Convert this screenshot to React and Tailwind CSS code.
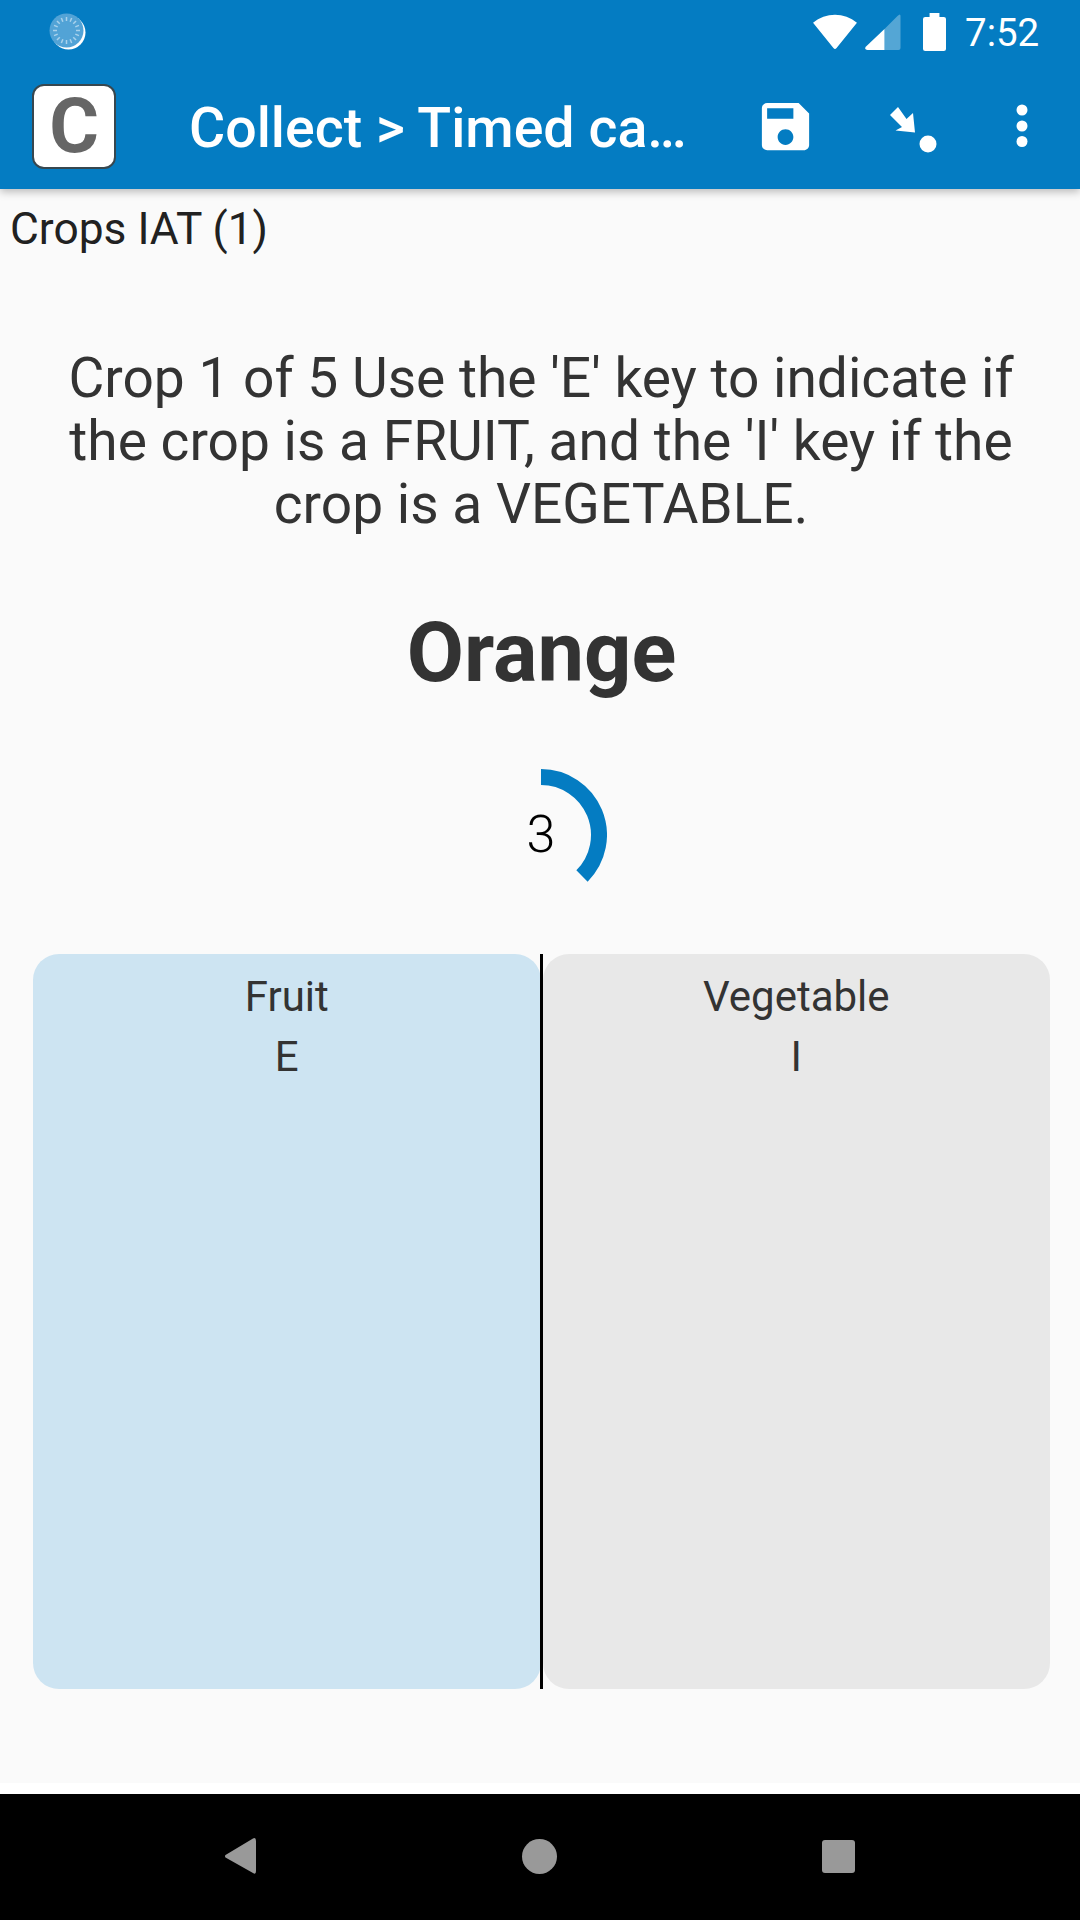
import { useState } from 'react';

function StatusIcons() {
  return (
    <div className="flex items-center">
      {/* wifi */}
      <svg width="46" height="37" viewBox="0 0 44 38" preserveAspectRatio="none">
        <path d="M1 10 C13 -1 31 -1 43 10 L23.5 36 Q22 38 20.500 36 Z" fill="#fff" />
      </svg>
      {/* signal */}
      <svg width="36" height="36" viewBox="0 0 35 36" className="ml-[7px]">
        <path d="M0 33 L19 15 L19 36 L2 36 Q-1 36 0 33 Z" fill="#fff" />
        <path d="M19 15 L32 2 Q35 -1 35 2 L35 34 Q35 36 33 36 L19 36 Z" fill="#fff" fillOpacity="0.32" />
      </svg>
      {/* battery */}
      <svg width="23" height="38" viewBox="0 0 21 38" preserveAspectRatio="none" className="ml-[22px]">
        <path d="M6 0 H15 V4 H19 Q21 4 21 6 V36 Q21 38 19 38 H2 Q0 38 0 36 V6 Q0 4 2 4 H6 Z" fill="#fff" />
      </svg>
      <span className="ml-[19px] mt-[4px] w-[73px] whitespace-nowrap text-[38.500px] leading-none text-white">7:52</span>
    </div>
  );
}

function SyncDot() {
  const ticks = Array.from({ length: 16 }, (_, i) => i * 22.5);
  return (
    <svg width="38" height="38" viewBox="0 0 38 38">
      <circle cx="19.500" cy="19.500" r="17" fill="#fff" />
      <circle cx="17.500" cy="17.500" r="17" fill="#52a3d6" />
      {ticks.map((a) => (
        <line key={a} x1="17.500" y1="4" x2="17.500" y2="8" stroke="#a9d2ec" strokeWidth="1.500" transform={`rotate(${a} 17.500 17.500)`} />
      ))}
    </svg>
  );
}

function Toolbar() {
  return (
    <div className="flex h-[126px] items-center pl-[32px]">
      <div className="flex h-[85px] w-[84px] shrink-0 items-center justify-center rounded-[12px] border-[2px] border-[#37474f] bg-white">
        <span className="text-[76px] font-bold leading-none text-[#666666]">C</span>
      </div>
      <div className="ml-[73px] mt-[6px] w-[520px] shrink-0 whitespace-nowrap text-[55.500px] font-medium leading-none text-white">
        Collect &gt; Timed ca…
      </div>
      <svg width="63" height="63" viewBox="0 0 24 24" className="ml-[45px] shrink-0 fill-white">
        <path d="M17 3H5c-1.110 0-2 .9-2 2v14c0 1.100.89 2 2 2h14c1.100 0 2-.9 2-2V7l-4-4zm-5 16c-1.660 0-3-1.340-3-3s1.340-3 3-3 3 1.340 3 3-1.340 3-3 3zm3-10H5V5h10v4z" />
      </svg>
      <svg width="47" height="48" viewBox="0 0 47 48" className="ml-[73px] shrink-0 mt-[10px]">
        <polygon points="8,0 0,8 12,20 5.500,23.500 25,25.500 23,6 16.500,12" fill="#fff" />
        <circle cx="38" cy="37" r="8.500" fill="#fff" />
      </svg>
      <svg width="14" height="46" viewBox="0 0 14 46" className="ml-[78px] shrink-0">
        <circle cx="7" cy="7" r="5.500" fill="#fff" />
        <circle cx="7" cy="23" r="5.500" fill="#fff" />
        <circle cx="7" cy="38.500" r="5.500" fill="#fff" />
      </svg>
    </div>
  );
}

function Countdown({ value }) {
  return (
    <div className="relative mx-auto h-[132px] w-[134px]">
      <svg width="134" height="132" viewBox="0 0 134 132">
        <path d="M68 8 A58 58 0 0 1 109 107" fill="none" stroke="#047cc2" strokeWidth="16" />
      </svg>
      <span className="absolute inset-0 flex items-center justify-center pl-[2px] text-[52px] font-light leading-none text-black">{value}</span>
    </div>
  );
}

function Choice({ label, keyName, tone }) {
  return (
    <div className={`flex-1 pt-[13px] text-center text-[42px] leading-[60px] text-[#333333] ${tone}`}>
      <div>{label}</div>
      <div>{keyName}</div>
    </div>
  );
}

export default function App() {
  const [count] = useState(3);
  return (
    <div className="flex h-[1920px] w-[1080px] flex-col overflow-hidden bg-white font-['Roboto',sans-serif]">
      <header className="relative z-10 bg-[#047cc2] shadow-[0_3px_8px_rgba(0,0,0,0.25)]">
        <div className="flex h-[63px] items-center justify-between pl-[49px] pr-[42px]">
          <SyncDot />
          <StatusIcons />
        </div>
        <Toolbar />
      </header>

      <main className="h-[1594px] bg-[#fafafa]">
        <div className="pl-[10px] pt-[15px] text-[44.300px] leading-[50px] text-[#212121]">Crops IAT (1)</div>
        <p className="mt-[93px] pl-[42px] pr-[40px] text-center text-[55.100px] leading-[63px] text-[#333333]">
          Crop 1 of 5 Use the 'E' key to indicate if the crop is a FRUIT, and the 'I' key if the crop is a VEGETABLE.
        </p>
        <h1 className="mt-[67px] pl-[3px] text-center text-[83px] font-bold leading-[100px] text-[#333333]">Orange</h1>
        <div className="mt-[66px]">
          <Countdown value={count} />
        </div>
        <div className="ml-[33px] mt-[53px] flex h-[735px] w-[1017px]">
          <Choice label="Fruit" keyName="E" tone="rounded-[26px] bg-[#cde4f2]" />
          <div className="-ml-[1px] w-[3px] shrink-0 bg-black" />
          <Choice label="Vegetable" keyName="I" tone="rounded-[26px] bg-[#e8e8e8]" />
        </div>
      </main>

      <div className="h-[11px] bg-white" />

      <nav className="flex h-[126px] items-center bg-black pb-[2px]">
        <svg width="32" height="36" viewBox="0 0 32 36" className="ml-[225px]">
          <path d="M0.500 17 L28 0.500 Q31 -1 31 3 L31 33 Q31 37 28 35 L0.500 19.500 Q-0.500 18 0.500 17 Z" fill="#999999" />
        </svg>
        <div className="ml-[265px] h-[35px] w-[35px] rounded-full bg-[#999999]" />
        <div className="ml-[265px] h-[33px] w-[33px] rounded-[3px] bg-[#999999]" />
      </nav>
    </div>
  );
}
